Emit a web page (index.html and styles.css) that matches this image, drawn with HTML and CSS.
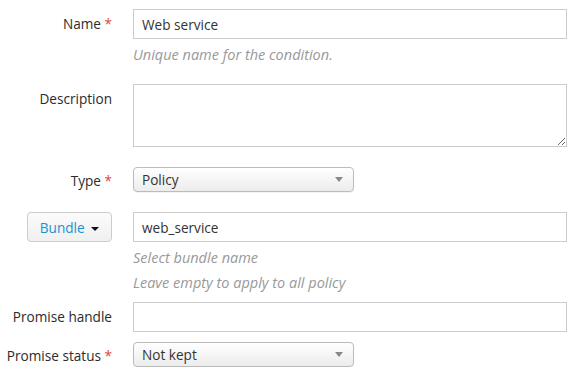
FILE: index.html
```html
<!DOCTYPE html>
<html lang="en">
<head>
    <meta charset="UTF-8">
    <meta name="viewport" content="width=device-width, initial-scale=1.0">
    <title>Condition</title>
    <link rel="stylesheet" href="styles.css">
</head>
<body>
    <form class="form">
        <div class="row row-name">
            <label class="label">Name <span class="req">*</span></label>
            <div class="controls">
                <input class="input" type="text" value="Web service">
                <p class="help help-first">Unique name for the condition.</p>
            </div>
        </div>

        <div class="row row-desc">
            <label class="label">Description</label>
            <div class="controls">
                <textarea class="input textarea"></textarea>
            </div>
        </div>

        <div class="row row-type">
            <label class="label label-select">Type <span class="req">*</span></label>
            <div class="controls">
                <div class="select-wrap">
                    <select class="select">
                        <option>Policy</option>
                    </select>
                </div>
            </div>
        </div>

        <div class="row row-bundle">
            <div class="label label-btn">
                <button type="button" class="btn">Bundle <span class="caret"></span></button>
            </div>
            <div class="controls">
                <input class="input" type="text" value="web_service">
                <p class="help help-first">Select bundle name</p>
                <p class="help">Leave empty to apply to all policy</p>
            </div>
        </div>

        <div class="row row-handle">
            <label class="label">Promise handle</label>
            <div class="controls">
                <input class="input" type="text">
            </div>
        </div>

        <div class="row">
            <label class="label label-select">Promise status <span class="req">*</span></label>
            <div class="controls">
                <div class="select-wrap">
                    <select class="select">
                        <option>Not kept</option>
                    </select>
                </div>
            </div>
        </div>
    </form>
</body>
</html>
```

FILE: styles.css
```css
body {
    font-family: "Open Sans", Lato, sans-serif;
    font-size: 13.6px;
    color: #2b2b2b;
    background: #fff;
    margin: 0;
    padding: 9px 0 0 0;
}
.form {
    width: 567px;
}
.row {
    display: grid;
    grid-template-columns: 112px 434px;
    column-gap: 21px;
    align-items: start;
}
.row-name {
    margin-bottom: 17px;
}
.row-desc, .row-type {
    margin-bottom: 20px;
}
.row-bundle {
    margin-bottom: 7px;
}
.row-handle {
    margin-bottom: 10px;
}
.label {
    text-align: right;
    line-height: 30px;
    white-space: nowrap;
}
.label-select {
    line-height: 25px;
    padding-top: 1px;
    height: 25px;
    box-sizing: border-box;
}
.req {
    color: #e0453a;
}
.label-btn {
    display: flex;
    justify-content: flex-end;
}
.input {
    box-sizing: border-box;
    width: 434px;
    height: 30px;
    margin: 0;
    padding: 0 8px;
    border: 1px solid #ccc;
    border-radius: 0;
    font-family: inherit;
    font-size: 13.6px;
    color: #333;
    background: #fff;
    outline: none;
}
.textarea {
    display: block;
    height: 63px;
    resize: vertical;
}
.help {
    margin: 0;
    font-size: 14.5px;
    line-height: 25px;
    font-style: italic;
    color: #999;
}
.help-first {
    margin-top: 3px;
}
.select-wrap {
    position: relative;
    width: 221px;
}
.select {
    appearance: none;
    -webkit-appearance: none;
    box-sizing: border-box;
    display: block;
    width: 221px;
    height: 25px;
    margin: 0;
    padding: 0 8px;
    border: 1px solid #bbb;
    border-radius: 4px;
    background: linear-gradient(#ffffff, #ececec);
    font-family: inherit;
    font-size: 13.6px;
    color: #333;
    box-shadow: 0 1px 1px rgba(0, 0, 0, 0.05);
}
.select-wrap::after {
    content: "";
    position: absolute;
    right: 11px;
    top: 10px;
    border-left: 4px solid transparent;
    border-right: 4px solid transparent;
    border-top: 5px solid #888;
    pointer-events: none;
}
.btn {
    box-sizing: border-box;
    width: 85px;
    height: 30px;
    margin: 0;
    padding: 0;
    border: 1px solid #ccc;
    border-radius: 4px;
    background: linear-gradient(#fbfbfb, #f0f0f0);
    font-family: inherit;
    font-size: 13.6px;
    color: #1a93d1;
    cursor: pointer;
}
.caret {
    display: inline-block;
    width: 0;
    height: 0;
    margin-left: 3px;
    vertical-align: middle;
    border-left: 4px solid transparent;
    border-right: 4px solid transparent;
    border-top: 4px solid #111;
}
```
